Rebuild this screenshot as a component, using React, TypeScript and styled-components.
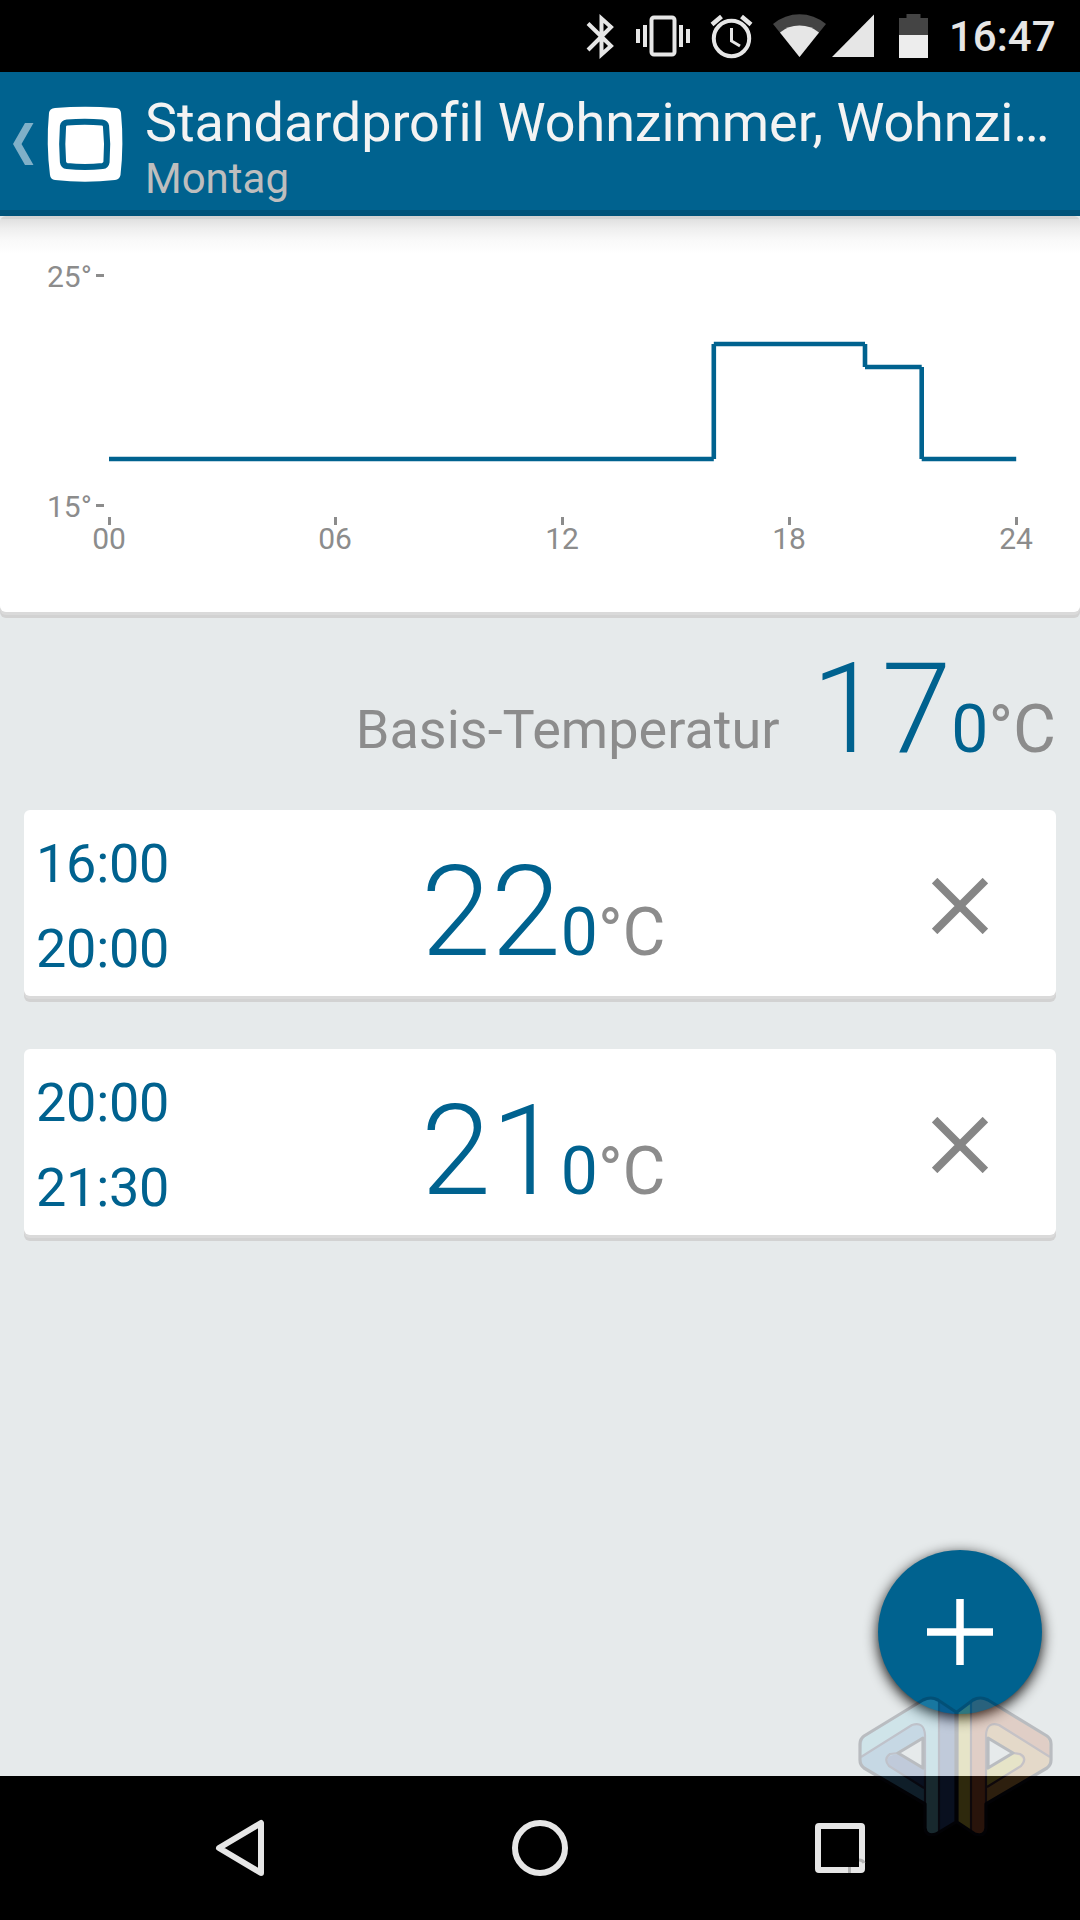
import React from "react";
import styled, { createGlobalStyle } from "styled-components";

const BLUE = "#00628f";
const GREY = "#8c8c8c";

const Global = createGlobalStyle`
  * { box-sizing: border-box; }
  body { margin: 0; background: #e6eaeb; }
`;

const Screen = styled.div`
  position: relative;
  width: 1080px;
  height: 1920px;
  display: flex;
  flex-direction: column;
  background: #e6eaeb;
  font-family: Roboto, "Liberation Sans", sans-serif;
  overflow: hidden;
`;

const StatusBar = styled.header`
  height: 72px;
  flex: none;
  display: flex;
  align-items: center;
  justify-content: flex-end;
  background: #000;
  color: #e6e6e6;
  padding-right: 24px;
`;

const Clock = styled.time`
  font-size: 42px;
  font-weight: 500;
  line-height: 72px;
  width: 107px;
  margin-left: 19px;
  padding-top: 2px;
  white-space: nowrap;
`;

const AppBar = styled.div`
  height: 144px;
  flex: none;
  display: flex;
  background: ${BLUE};
  border-bottom: 6px solid #00537a;
`;

const UpButton = styled.button`
  width: 145px;
  flex: none;
  border: 0;
  padding: 0;
  background: none;
  display: flex;
`;

const Titles = styled.div`
  flex: 1;
  padding-top: 19px;
`;

const Title = styled.h1`
  margin: 0;
  font-size: 54px;
  font-weight: 400;
  line-height: 64px;
  letter-spacing: -0.1px;
  color: #f3f3f3;
  white-space: nowrap;
`;

const Subtitle = styled.div`
  margin-top: -1px;
  font-size: 42px;
  line-height: 50px;
  color: #bebebe;
`;

const Content = styled.main`
  flex: 1;
  min-height: 0;
  display: flex;
  flex-direction: column;
`;

const ChartCard = styled.section`
  height: 396px;
  flex: none;
  border-radius: 6px;
  background: linear-gradient(#d3d3d3 0, #d5d5d5 3px, #e0e0e0 3px, #efefef 13px, #f9f9f9 24px, #fff 38px);
  box-shadow: 0 3px 0 #dadada, 0 6px 0 #d2d2d2;
`;

const Chart = styled.svg`
  display: block;
  font-size: 30px;
  fill: ${GREY};
`;

const BaseRow = styled.section`
  height: 198px;
  flex: none;
  display: flex;
  align-items: baseline;
  justify-content: flex-end;
  padding: 23px 24px 0 0;
`;

const BaseLabel = styled.span`
  font-size: 54px;
  color: ${GREY};
  margin-right: 32px;
  position: relative;
  top: -4px;
`;

const Temperature = styled.div`
  display: flex;
  align-items: baseline;
  line-height: 148px;
  color: ${BLUE};
`;

const Whole = styled.span`
  font-size: 126px;
  font-weight: 300;
`;

const Fraction = styled.span`
  font-size: 66px;
`;

const Unit = styled.span`
  font-size: 66px;
  color: ${GREY};
`;

const Slots = styled.ul`
  list-style: none;
  margin: 0;
  padding: 0 24px;
  display: flex;
  flex-direction: column;
  gap: 53px;
`;

const SlotCard = styled.li`
  height: 186px;
  display: grid;
  grid-template-columns: 397px 1fr 192px;
  background: #fff;
  border-radius: 6px;
  box-shadow: 0 3px 0 #dadada, 0 6px 0 #d2d2d2;
`;

const Times = styled.div`
  display: flex;
  flex-direction: column;
  padding: 11px 0 0 12px;
  font-size: 54px;
  line-height: 85px;
  letter-spacing: -0.25px;
  color: ${BLUE};
`;

const SlotTemp = styled.div`
  padding-top: 28px;
`;

const RemoveButton = styled.button`
  border: 0;
  padding: 0 0 6px;
  background: none;
  display: flex;
  align-items: center;
  justify-content: center;
`;

const AddButton = styled.button`
  position: absolute;
  left: 878px;
  top: 1550px;
  width: 164px;
  height: 164px;
  padding: 0;
  border: 0;
  border-radius: 50%;
  background: ${BLUE};
  box-shadow: 0 4px 14px rgba(0, 0, 0, 0.95);
  display: flex;
  align-items: center;
  justify-content: center;
`;

const NavBar = styled.nav`
  height: 144px;
  flex: none;
  background: #000;
`;

const Emblem = styled.svg`
  position: absolute;
  left: 850px;
  top: 1690px;
`;

const STATUS_ICONS = (
  <svg width="350" height="72" viewBox="580 0 350 72" fill="#e6e6e6">
    <path d="M588 23.500 611 46 601.500 54.500V18.500L611 27 588 50" fill="none" stroke="#e6e6e6" strokeWidth="4" />
    <rect x="651.500" y="17.500" width="23" height="37" rx="2.500" fill="none" stroke="#e6e6e6" strokeWidth="4" />
    <path d="M636 29h4v14h-4zM643 25h4v22h-4zM679 25h4v22h-4zM686 29h4v14h-4z" />
    <circle cx="731.500" cy="38.500" r="17.700" fill="none" stroke="#e6e6e6" strokeWidth="4" />
    <path d="M731.500 28v13l8.500 5" fill="none" stroke="#e6e6e6" strokeWidth="3" />
    <path d="M712 24.500 721.500 16.500M751 24.500 741.500 16.500" stroke="#e6e6e6" strokeWidth="4.500" />
    <path d="M799.500 57 773 24Q785 14.300 799.500 14.300T826 24Z" fill="#444" />
    <path d="M799.500 57 780 32.500Q788 25.500 799.500 25.500T819 32.500Z" />
    <path d="M832 57 874 14.500V57Z" />
    <path d="M899 35V18h7.500V14h14v4h7.500v17z" fill="#444" />
    <path d="M899 35h29v23h-29z" fill="#ededed" />
  </svg>
);

const X0 = 109;
const HOUR = 37.8;
const y = (t: number) => 275 + (25 - t) * 23;
const x = (h: number) => X0 + h * HOUR;

interface Slot {
  from: string;
  to: string;
  start: number;
  end: number;
  temp: number;
}

const SLOTS: Slot[] = [
  { from: "16:00", to: "20:00", start: 16, end: 20, temp: 22 },
  { from: "20:00", to: "21:30", start: 20, end: 21.5, temp: 21 },
];
const BASE = 17;

// Every horizontal and vertical run is its own segment, so corners stay notched.
const profilePath = () => {
  let d = "";
  let h = 0;
  let t = BASE;
  const step = (nextHour: number, nextTemp: number) => {
    d += `M${x(h)} ${y(t)}H${x(nextHour)}M${x(nextHour)} ${y(t)}V${y(nextTemp)}`;
    h = nextHour;
    t = nextTemp;
  };
  SLOTS.forEach((s, i) => {
    if (i === 0) step(s.start, s.temp);
    step(s.end, SLOTS[i + 1]?.temp ?? BASE);
  });
  return `${d}M${x(h)} ${y(t)}H${x(24)}`;
};

const Degrees = ({ value }: { value: number }) => (
  <Temperature>
    <Whole>{value}</Whole>
    <Fraction>0</Fraction>
    <Unit>°C</Unit>
  </Temperature>
);

export default function App() {
  return (
    <Screen>
      <Global />
      <StatusBar>
        {STATUS_ICONS}
        <Clock>16:47</Clock>
      </StatusBar>
      <AppBar>
        <UpButton aria-label="Zurück">
          <svg width="145" height="138" viewBox="0 72 145 138">
            <path d="M25 123h8.500L21.500 144 33.500 165H25L13 144Z" fill="#80b0c8" />
            <path d="M55 108Q85 105.500 116 108 120.500 108.500 121 113 124 144 120.500 175 119.500 179.500 115 180 85 183.500 55 180 50.500 179.500 50 175 46 144 49 113 49.500 108.500 55 108Z" fill="#fff" />
            <path d="M67 122.500Q85 121 102 122.500 105.500 123 106 126 108 144 106.500 162 106 165.500 102.500 166 85 168 67 166 63.500 165.500 63 162 61.500 144 63 126 63.500 123 67 122.500Z" fill="#fff" stroke={BLUE} strokeWidth="6.200" />
          </svg>
        </UpButton>
        <Titles>
          <Title>Standardprofil Wohnzimmer, Wohnzi…</Title>
          <Subtitle>Montag</Subtitle>
        </Titles>
      </AppBar>
      <Content>
        <ChartCard>
          <Chart width="1080" height="396" viewBox="0 216 1080 396">
            <text x="47" y="287">25°</text>
            <text x="47" y="517">15°</text>
            <path d="M96 274h8v3h-8zM96 504h8v3h-8z" />
            {[0, 6, 12, 18, 24].map((h) => (
              <React.Fragment key={h}>
                <rect x={Math.floor(x(h)) - 1} y="517" width="3" height="8" />
                <text x={Math.floor(x(h))} y="549" textAnchor="middle">
                  {String(h).padStart(2, "0")}
                </text>
              </React.Fragment>
            ))}
            <path d={profilePath()} fill="none" stroke={BLUE} strokeWidth="4.600" />
          </Chart>
        </ChartCard>
        <BaseRow>
          <BaseLabel>Basis-Temperatur</BaseLabel>
          <Degrees value={BASE} />
        </BaseRow>
        <Slots>
          {SLOTS.map((s) => (
            <SlotCard key={s.from}>
              <Times>
                <span>{s.from}</span>
                <span>{s.to}</span>
              </Times>
              <SlotTemp>
                <Degrees value={s.temp} />
              </SlotTemp>
              <RemoveButton aria-label="Entfernen">
                <svg width="56" height="56" viewBox="0 0 56 56">
                  <path d="M2.600 2.600 53.400 53.400M53.400 2.600 2.600 53.400" stroke="#868686" strokeWidth="7.800" />
                </svg>
              </RemoveButton>
            </SlotCard>
          ))}
        </Slots>
      </Content>
      <NavBar>
        <svg width="1080" height="144" viewBox="0 1776 1080 144" fill="none" stroke="#e6e6e6" strokeWidth="6" strokeLinejoin="round">
          <path d="M219 1848 261 1823V1873Z" />
          <circle cx="540" cy="1848" r="25" />
          <rect x="818" y="1826" width="44" height="44" rx="1" />
          <path d="M849.500 1867v6M859 1860q4 0 5 3" stroke="#b4b4b4" strokeWidth="3" />
        </svg>
      </NavBar>
      <AddButton aria-label="Hinzufügen">
        <svg width="66" height="66" viewBox="0 0 66 66">
          <path d="M33 0V66M0 33H66" stroke="#fff" strokeWidth="7.500" />
        </svg>
      </AddButton>
      <Emblem width="210" height="150" viewBox="850 1690 210 150" aria-hidden="true">
        <g opacity="0.2" strokeLinejoin="round">
          <path d="M923 1700Q931 1696 938 1700L956 1712V1822L936 1834Q926 1837 925 1828V1804L864 1768Q860 1765 860 1760V1744Q860 1739 864 1736ZM923 1738 898 1753 923 1768Z" fill="#4b96cd" fillRule="evenodd" />
          <path d="M988 1700Q980 1696 973 1700L957 1712V1822L975 1834Q985 1837 986 1828V1804L1047 1768Q1051 1765 1051 1760V1744Q1051 1739 1047 1736ZM988 1738 1013 1753 988 1768Z" fill="#e19b46" fillRule="evenodd" />
          <path d="M861 1757 911 1726Q921 1721 924 1732V1828Q928 1836 939 1832V1702Q931 1697 923 1701L865 1737Q861 1740 861 1757Z" fill="#78cde6" />
          <path d="M939 1702 956 1713V1822L939 1832ZM924 1769 898 1754Q882 1756 889 1766L924 1788Z" fill="#2d509b" />
          <path d="M1050 1757 998 1726Q988 1721 986 1732V1828Q982 1836 971 1832V1702Q979 1697 987 1701L1046 1737Q1050 1740 1050 1757Z" fill="#cd6437" />
          <path d="M971 1703 958 1713V1823L971 1832ZM987 1769 1014 1754Q1026 1756 1021 1766L987 1787Z" fill="#e6cd41" />
          <g fill="none" stroke="#28284b" strokeWidth="2.200">
            <path d="M939 1702V1832M925 1828V1735Q924 1721 912 1725L861 1757M924 1788 889 1766Q883 1759 890 1754L898 1753" />
            <path d="M971 1702V1832M986 1828V1735Q987 1721 999 1725L1050 1757M987 1787 1021 1766Q1028 1758 1020 1754L1013 1753" stroke="#462837" />
          </g>
          <g fill="none" stroke="#0c0c1c" strokeWidth="3.200">
            <path d="M923 1700Q931 1696 938 1700L956 1712V1822L936 1834Q926 1837 925 1828V1804L864 1768Q860 1765 860 1760V1744Q860 1739 864 1736ZM923 1738 898 1753 923 1768Z" />
            <path d="M988 1700Q980 1696 973 1700L957 1712V1822L975 1834Q985 1837 986 1828V1804L1047 1768Q1051 1765 1051 1760V1744Q1051 1739 1047 1736ZM988 1738 1013 1753 988 1768Z" />
          </g>
        </g>
      </Emblem>
    </Screen>
  );
}
